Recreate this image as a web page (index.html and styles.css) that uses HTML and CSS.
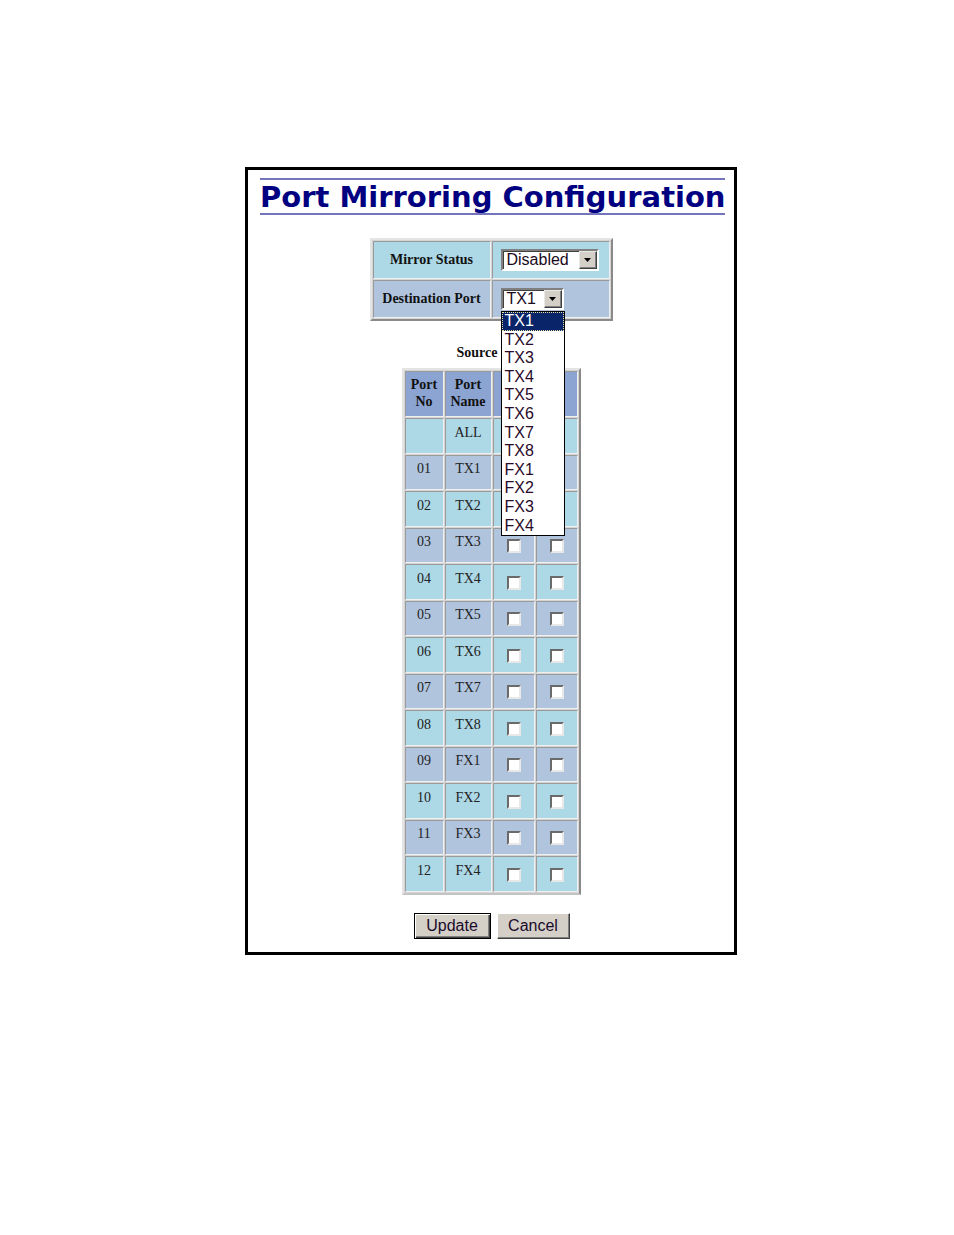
FILE: index.html
```html
<!DOCTYPE html>
<html>
<head>
<meta charset="utf-8">
<link rel="stylesheet" href="styles.css">
</head>
<body>
<div class="frame">
  <div class="title">Port Mirroring Configuration</div>

  <table class="cfg">
    <tr class="r1">
      <td class="lbl">Mirror Status</td>
      <td class="val">
        <div class="sel sel-wide"><span class="sel-text">Disabled</span><span class="sel-btn"><svg width="8" height="4" viewBox="0 0 8 4"><path d="M0 0h7l-3.5 4z" fill="#000"/></svg></span></div>
      </td>
    </tr>
    <tr class="r2">
      <td class="lbl">Destination Port</td>
      <td class="val">
        <div class="sel sel-narrow"><span class="sel-text">TX1</span><span class="sel-btn"><svg width="8" height="4" viewBox="0 0 8 4"><path d="M0 0h7l-3.5 4z" fill="#000"/></svg></span>
          <div class="list">
            <div class="opt on">TX1</div>
            <div class="opt">TX2</div>
            <div class="opt">TX3</div>
            <div class="opt">TX4</div>
            <div class="opt">TX5</div>
            <div class="opt">TX6</div>
            <div class="opt">TX7</div>
            <div class="opt">TX8</div>
            <div class="opt">FX1</div>
            <div class="opt">FX2</div>
            <div class="opt">FX3</div>
            <div class="opt">FX4</div>
          </div>
        </div>
      </td>
    </tr>
  </table>

  <div class="cap">Source Port</div>
  <table class="ports">
    <tr class="hd">
      <td class="c1">Port<br>No</td>
      <td class="c2">Port<br>Name</td>
      <td class="c3">Rx</td>
      <td class="c4">Tx</td>
    </tr>
    <tr class="lb"><td class="t"></td><td class="t">ALL</td><td><span class="cb"></span></td><td><span class="cb"></span></td></tr>
    <tr class="sb"><td class="t">01</td><td class="t">TX1</td><td><span class="cb"></span></td><td><span class="cb"></span></td></tr>
    <tr class="lb"><td class="t">02</td><td class="t">TX2</td><td><span class="cb"></span></td><td><span class="cb"></span></td></tr>
    <tr class="sb"><td class="t">03</td><td class="t">TX3</td><td><span class="cb"></span></td><td><span class="cb"></span></td></tr>
    <tr class="lb"><td class="t">04</td><td class="t">TX4</td><td><span class="cb"></span></td><td><span class="cb"></span></td></tr>
    <tr class="sb"><td class="t">05</td><td class="t">TX5</td><td><span class="cb"></span></td><td><span class="cb"></span></td></tr>
    <tr class="lb"><td class="t">06</td><td class="t">TX6</td><td><span class="cb"></span></td><td><span class="cb"></span></td></tr>
    <tr class="sb"><td class="t">07</td><td class="t">TX7</td><td><span class="cb"></span></td><td><span class="cb"></span></td></tr>
    <tr class="lb"><td class="t">08</td><td class="t">TX8</td><td><span class="cb"></span></td><td><span class="cb"></span></td></tr>
    <tr class="sb"><td class="t">09</td><td class="t">FX1</td><td><span class="cb"></span></td><td><span class="cb"></span></td></tr>
    <tr class="lb"><td class="t">10</td><td class="t">FX2</td><td><span class="cb"></span></td><td><span class="cb"></span></td></tr>
    <tr class="sb"><td class="t">11</td><td class="t">FX3</td><td><span class="cb"></span></td><td><span class="cb"></span></td></tr>
    <tr class="lb"><td class="t">12</td><td class="t">FX4</td><td><span class="cb"></span></td><td><span class="cb"></span></td></tr>
  </table>

  <div class="btns">
    <span class="btn btn-def">Update</span>
    <span class="btn btn-cancel">Cancel</span>
  </div>
</div>
</body>
</html>
```
FILE: styles.css
```css
html, body { margin: 0; padding: 0; background: #fff; }
body { font-family: "Liberation Serif", "Times New Roman", serif; }

.frame {
  width: 486px;
  margin: 167px 0 0 245px;
  border: 3px solid #000;
  padding: 0 0 13px 0;
  box-sizing: content-box;
}

.title {
  margin: 8px 9px 0 12px;
  border-top: 2px solid #7474bc;
  border-bottom: 2px solid #7474bc;
  font-family: "DejaVu Sans", Verdana, sans-serif;
  font-weight: bold;
  font-size: 29px;
  line-height: 32px;
  padding-top: 1px;
  height: 32px;
  color: #000080;
  text-align: center;
  white-space: nowrap;
}

/* top config table */
.cfg {
  margin: 23px auto 0 auto;
  border-collapse: separate;
  border-spacing: 1px;
  border: 2px solid;
  border-color: #e4e4e4 #8a8a8a #8a8a8a #e4e4e4;
  background: #d4d4d4;
}
.cfg td {
  border: 1px solid;
  border-color: #9a9a9a #f0f0f0 #f0f0f0 #9a9a9a;
  padding: 0;
  vertical-align: middle;
}
.cfg .r1 td { background: #add8e6; height: 36px; }
.cfg .r2 td { background: #b0c4de; height: 36px; }
.cfg .lbl {
  width: 116px;
  font-weight: bold;
  font-size: 14px;
  text-align: center;
  color: #111;
}
.cfg .val { width: 108px; padding-left: 8px; }

.sel {
  position: relative;
  height: 22px;
  box-sizing: border-box;
  border: 2px solid;
  border-color: #808080 #ffffff #ffffff #808080;
  box-shadow: inset 1px 1px 0 #404040;
  background: #fff;
  display: flex;
  align-items: center;
  font-family: "Liberation Sans", Arial, sans-serif;
  font-size: 16px;
  color: #1a0a1a;
}
.sel-wide { width: 98px; }
.sel-narrow { width: 63px; }
.sel-text { padding-left: 4px; flex: 1; line-height: 18px; }
.sel-btn {
  width: 18px;
  height: 18px;
  box-sizing: border-box;
  margin-right: 0;
  background: #d4d0c8;
  border: 1px solid;
  border-color: #e8e8e8 #404040 #404040 #e8e8e8;
  box-shadow: inset -1px -1px 0 #808080;
  display: flex;
  align-items: center;
  justify-content: center;
}

.list {
  position: absolute;
  top: 21px;
  left: -2px;
  width: 64px;
  height: 225px;
  box-sizing: border-box;
  border: 1px solid #000;
  background: #fff;
  z-index: 5;
}
.opt {
  height: 18.6px;
  line-height: 18.6px;
  padding-left: 3px;
  font-family: "Liberation Sans", Arial, sans-serif;
  font-size: 16px;
  color: #2a0a2a;
}
.opt.on {
  background: #0a246a;
  color: #fff;
  outline: 1px dotted #e8e0a0;
  outline-offset: -1px;
}

/* caption */
.cap {
  margin-top: 23px;
  text-align: center;
  font-weight: bold;
  font-size: 14px;
  line-height: 18px;
  color: #111;
  padding-bottom: 6px;
  padding-left: 2px;
}

/* ports table */
.ports {
  margin: 0 auto;
  border-collapse: separate;
  border-spacing: 1px;
  border: 2px solid;
  border-color: #e4e4e4 #8a8a8a #c4c4c4 #e4e4e4;
  background: #d4d4d4;
}
.ports td {
  border: 1px solid;
  border-color: #9a9a9a #f0f0f0 #f0f0f0 #9a9a9a;
  padding: 0;
  text-align: center;
  vertical-align: middle;
  font-size: 14px;
  color: #222;
  height: 33.5px;
}
.ports .hd td {
  background: #8ca4d2;
  font-weight: bold;
  line-height: 17px;
  padding-bottom: 2px;
  height: 42px;
  color: #111;
}
.ports .c1 { width: 37px; }
.ports .c2 { width: 45px; }
.ports .c3 { width: 40px; }
.ports .c4 { width: 40px; }
.ports .lb td { background: #add8e6; }
.ports .sb td { background: #b0c4de; }
.ports td.t { padding-bottom: 6px; height: 27.5px; }

.cb {
  display: inline-block;
  vertical-align: middle;
  width: 14px;
  height: 14px;
  box-sizing: border-box;
  border: 2px solid;
  border-color: #6a6a6a #e8e8e8 #e8e8e8 #6a6a6a;
  background: #fff;
  margin-top: 0;
}

.btns {
  margin-top: 18px;
  display: flex;
  justify-content: center;
  gap: 6px;
  padding-left: 1px;
}
.btn {
  height: 26px;
  box-sizing: border-box;
  background: #d4d0c8;
  font-family: "Liberation Sans", Arial, sans-serif;
  font-size: 16px;
  color: #1a0a2a;
  display: flex;
  align-items: center;
  justify-content: center;
}
.btn-def {
  width: 77px;
  border: 1px solid #000;
  box-shadow: inset 1px 1px 0 #ffffff, inset -1px -1px 0 #404040, inset -2px -2px 0 #808080;
}
.btn-cancel {
  width: 73px;
  border: 1px solid;
  border-color: #ffffff #404040 #404040 #ffffff;
  box-shadow: inset -1px -1px 0 #808080;
}
```
